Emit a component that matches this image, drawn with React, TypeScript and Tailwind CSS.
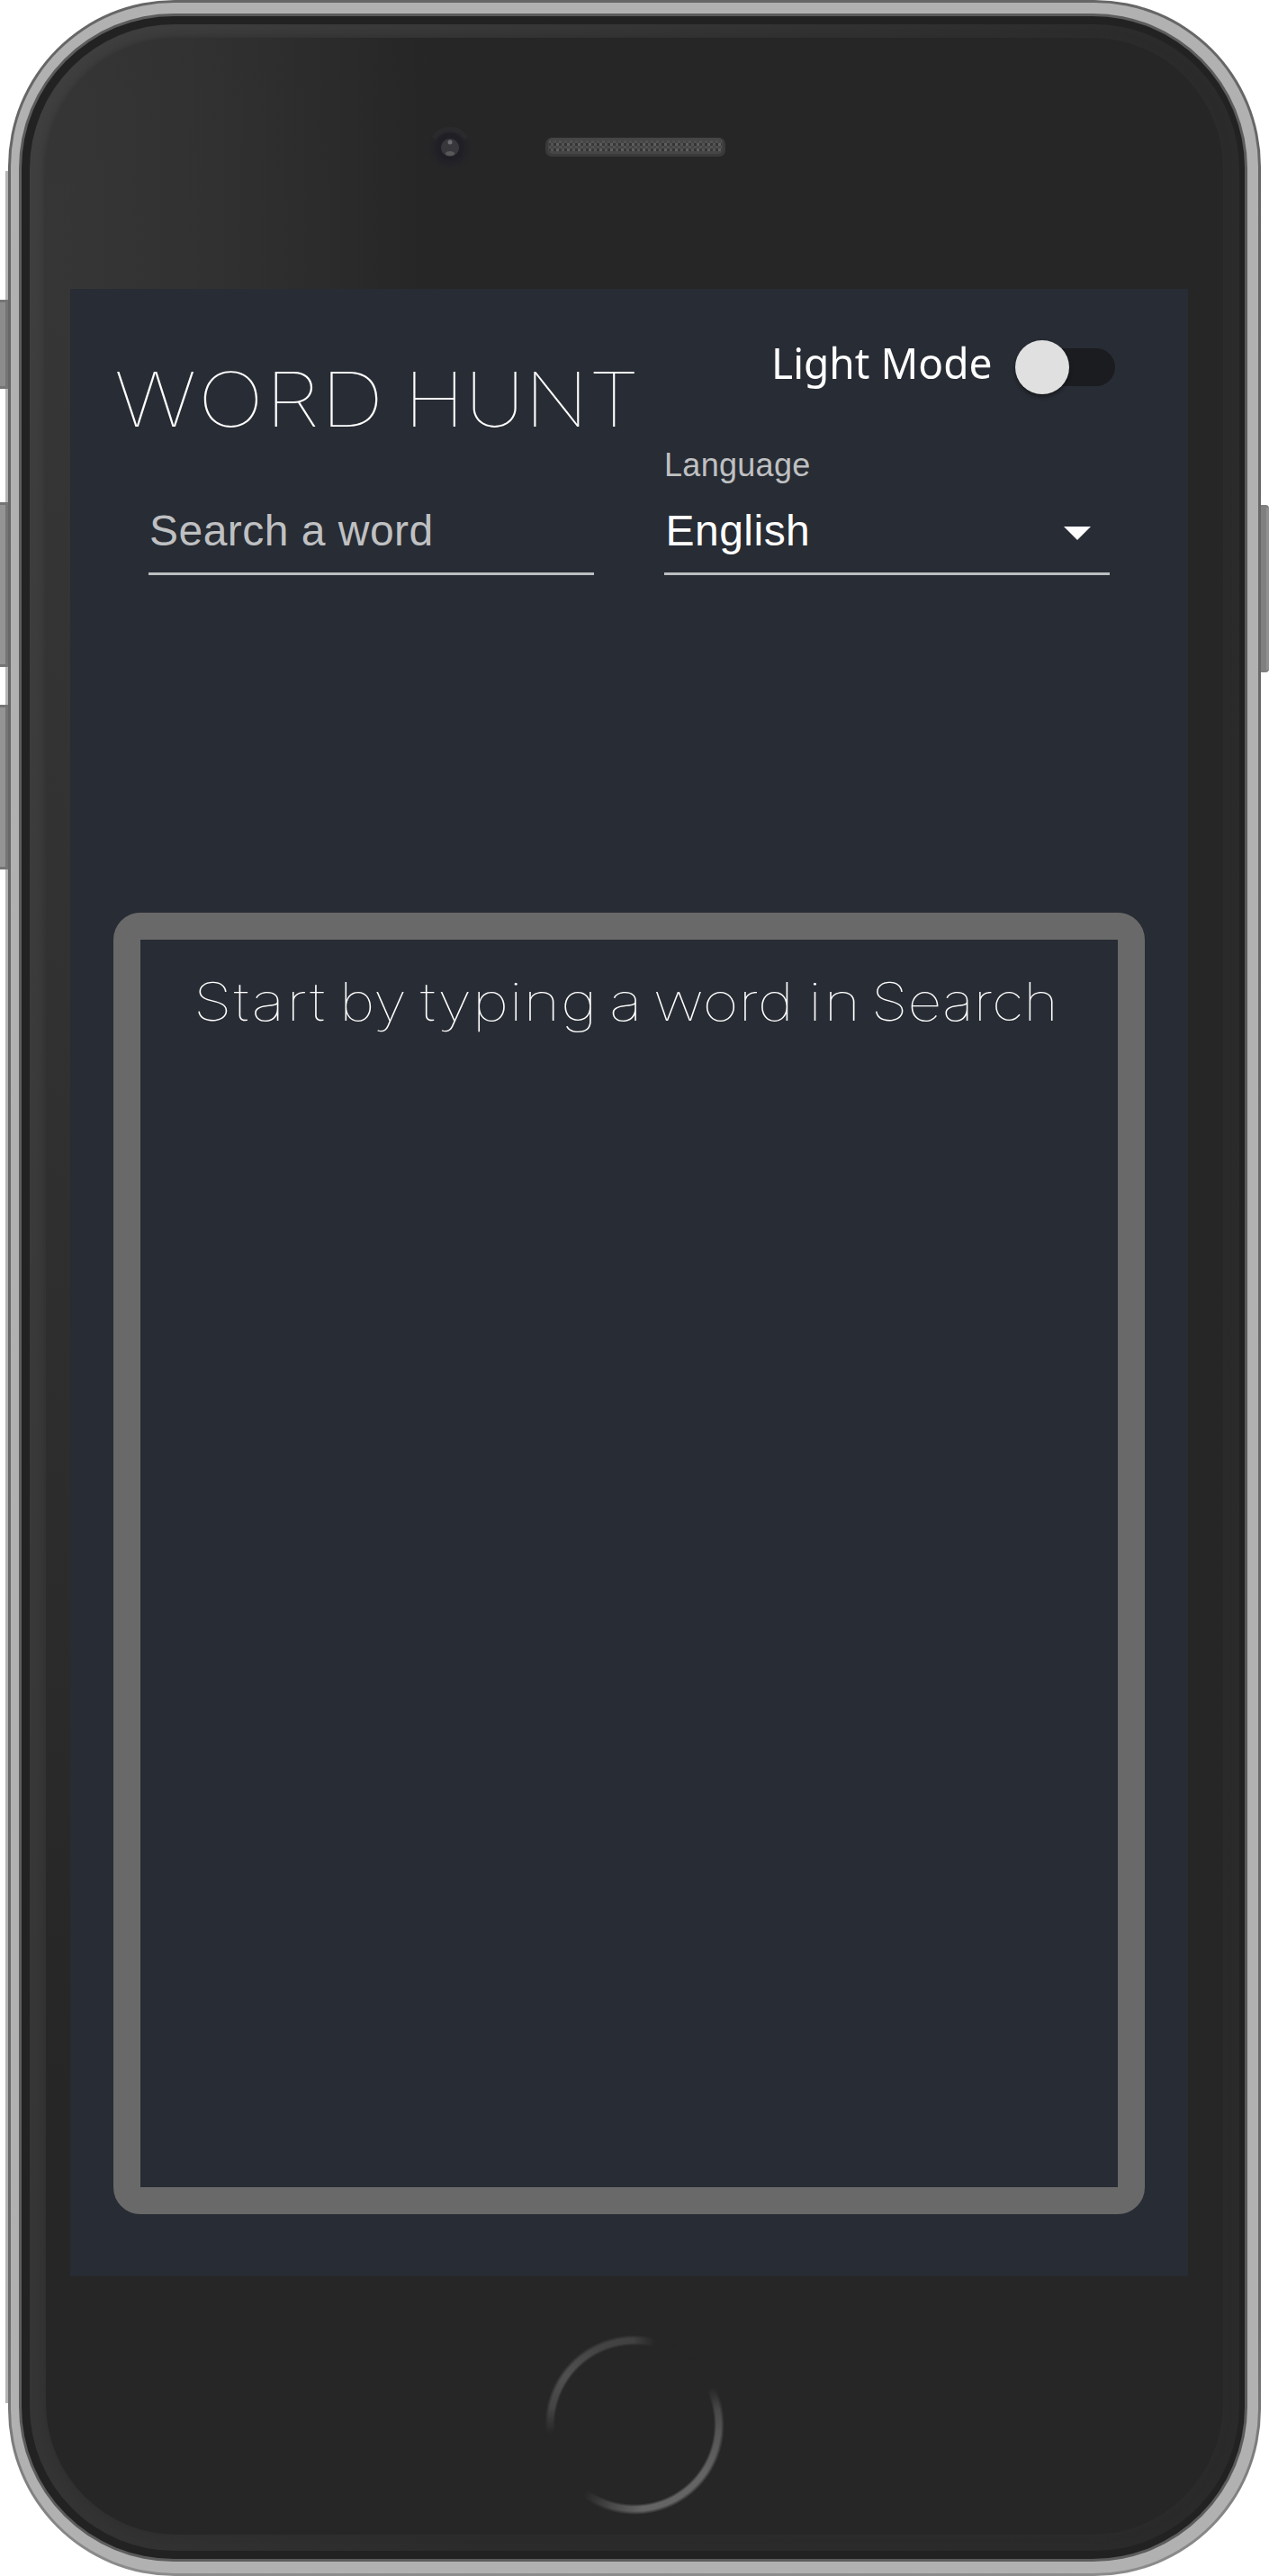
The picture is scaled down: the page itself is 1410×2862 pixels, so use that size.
import { ReactNode } from "react";

function Field({ label, children, tone }: { label?: string; children: ReactNode; tone: string }) {
  return (
    <div className="h-[150px] w-[495px] border-b-[3px] border-[#bcbec0] font-['Liberation_Sans',sans-serif]">
      <div className="mt-[10px] h-9 text-[36px] leading-9 tracking-[0.3px] text-[#bfc0c2]">{label}</div>
      <div className={"mt-[31px] flex h-12 items-center justify-between text-[48px] leading-[48px] tracking-[0.48px] " + tone}>
        {children}
      </div>
    </div>
  );
}

function Toggle() {
  return (
    <button className="relative flex h-[60px] w-[111px] items-center" aria-label="Light Mode">
      <span className="ml-[9px] h-[42px] w-[102px] rounded-full bg-[#1b1c20]" />
      <span className="absolute left-0 top-0 size-[60px] rounded-full bg-[#e0e0e0] shadow-[0_4px_4px_-2px_rgba(0,0,0,0.35),0_3px_5px_rgba(0,0,0,0.2)]" />
    </button>
  );
}

function WordHunt() {
  return (
    <main className="flex h-[2208px] w-[1242px] flex-col overflow-hidden bg-[#282c34] text-white">
      <header className="flex h-[168px] shrink-0">
        <h1 className="flex w-[779px] whitespace-nowrap pl-[49px] pt-[81px] font-['Inter',sans-serif] text-[84px] font-thin leading-[84px]">
          <span className="block w-[322px] origin-left scale-x-[1.17] tracking-[1.2px]">WORD</span>{" "}
          <span className="block w-[268px] origin-left scale-x-[1.09] tracking-[0.4px]">HUNT</span>
        </h1>
        <div className="mt-[57px] flex h-[60px]">
          <span className="-mt-[5px] block w-[271px] origin-left scale-x-[0.96] whitespace-nowrap font-['Noto_Sans',sans-serif] text-[48px] leading-[60px]">
            Light Mode
          </span>
          <Toggle />
        </div>
      </header>

      <section className="flex shrink-0 gap-[78px] pl-[87px]">
        <Field tone="text-[#bfc0c2]">
          <span className="pl-px">Search a word</span>
        </Field>
        <Field label="Language" tone="text-white">
          <span className="pl-[1.5px]">English</span>
          <svg className="mr-[21px] mt-[5px] h-[15px] w-[30px]" viewBox="0 0 30 15" fill="currentColor">
            <path d="M0 0h30L15 15z" />
          </svg>
        </Field>
      </section>

      <section className="ml-12 mt-[375px] h-[1446px] w-[1146px] shrink-0 rounded-[30px] border-[30px] border-[#696969]">
        <p className="flex whitespace-nowrap pl-[58.6px] pt-[39px] font-['Inter',sans-serif] text-[59px] font-thin leading-[60px] text-white">
          <span className="block w-[162.4px] origin-left scale-x-[1.18] tracking-[1.9px]">Start</span>{" "}
          <span className="block w-[89.7px] origin-left scale-x-[1.15]">by</span>{" "}
          <span className="block w-[210px] origin-left scale-x-[1.18] tracking-[0.6px]">typing</span>{" "}
          <span className="block w-[49.3px] origin-left scale-x-[1.18]">a</span>{" "}
          <span className="block w-[172px] origin-left scale-x-[1.17]">word</span>{" "}
          <span className="block w-[69.6px] origin-left scale-x-[1.18] tracking-[2px]">in</span>{" "}
          <span className="block w-[202px] origin-left scale-x-[1.12]">Search</span>
        </p>
      </section>
    </main>
  );
}

function Speaker() {
  return (
    <svg className="h-[21px] w-[200px]" viewBox="0 0 200 21">
      <defs>
        <pattern id="mesh" width="12" height="6" patternUnits="userSpaceOnUse">
          <rect width="12" height="6" fill="#464646" />
          <rect width="3" height="3" fill="#5e5e5e" />
          <rect x="6" width="3" height="3" fill="#545454" />
          <rect x="3" y="3" width="3" height="3" fill="#525252" />
          <rect x="9" y="3" width="3" height="3" fill="#4e4e4e" />
          <rect x="3" width="3" height="3" fill="#383838" />
          <rect x="9" width="3" height="3" fill="#343434" />
        </pattern>
      </defs>
      <rect width="200" height="21" rx="7" fill="#3a3a3a" />
      <rect x="3" y="0" width="194" height="18" rx="5" fill="#464646" />
      <rect x="4" y="3" width="192" height="12" fill="url(#mesh)" />
    </svg>
  );
}

function Camera() {
  return (
    <svg className="size-[60px]" viewBox="0 0 60 60">
      <defs>
        <radialGradient id="halo">
          <stop offset="0.5" stopColor="#202026" />
          <stop offset="1" stopColor="#27262a" stopOpacity="0" />
        </radialGradient>
      </defs>
      <circle cx="30" cy="31" r="29" fill="url(#halo)" />
      <path d="M12 21a21 21 0 0 1 36 0" fill="none" stroke="#303033" strokeWidth="6" opacity="0.5" />
      <circle cx="30" cy="30" r="14" fill="#201f25" />
      <circle cx="30" cy="31" r="10" fill="#38383c" />
      <circle cx="30" cy="25" r="2.500" fill="#6c6c70" />
      <ellipse cx="30" cy="37.500" rx="5" ry="2.500" fill="#58585b" />
    </svg>
  );
}

function HomeButton() {
  return (
    <button
      aria-label="Home"
      className="size-[200px] rounded-full bg-[conic-gradient(from_0deg,#3f3f3f_0deg,#262626_14deg,#262626_64deg,#484848_80deg,#555555_95deg,#646464_125deg,#646464_175deg,#4a4a4a_195deg,#262626_216deg,#262626_264deg,#454545_282deg,#505050_305deg,#444444_335deg,#414141_360deg)] [mask:radial-gradient(circle_closest-side,transparent_88%,black_91%,black_96%,transparent_100%)]"
    />
  );
}

export default function App() {
  return (
    <div className="flex h-[2862px] w-[1410px] overflow-hidden bg-white">
      <div className="flex w-[9px] shrink-0 flex-col">
        <div className="ml-[6px] mt-[190px] h-[143px] bg-[#b4b4b4]" />
        <div className="h-[99px] border-y-[3px] border-r-[3px] border-[#757575] bg-[#8c8c8c]" />
        <div className="ml-[6px] h-[126px] bg-[#b4b4b4]" />
        <div className="h-[183px] border-y-[3px] border-r-[3px] border-[#757575] bg-[#949494]" />
        <div className="ml-[6px] h-[42px] bg-[#b4b4b4]" />
        <div className="h-[183px] border-y-[3px] border-r-[3px] border-[#757575] bg-[#949494]" />
        <div className="ml-[6px] h-[1704px] bg-[#b4b4b4]" />
      </div>

      <div className="h-[2862px] w-[1392px] shrink-0 rounded-[185px] bg-[linear-gradient(to_bottom,#666666_0%,#6c6c6c_90%,#8c8c8c_100%)] p-[3px]">
        <div className="h-full rounded-[182px] bg-[#b1b1b1] pb-[13px] pl-[9px] pr-[12px] pt-[12px]">
          <div className="h-full rounded-[172px] bg-[#5c5c5c] p-[3px]">
            <div className="h-full rounded-[169px] bg-[#222222] pb-[9px] pl-[9px] pr-[6px] pt-[9px]">
              <div className="h-full rounded-[161px] bg-[linear-gradient(105deg,#3f3f3f_0%,#343434_35%,#2b2b2b_60%,#2a2a2a_100%)] pb-[18px] pl-[18px] pr-[18px] pt-[15px]">
                <div className="flex h-full flex-col rounded-[146px] bg-[#262626] bg-[radial-gradient(ellipse_430px_2100px_at_10px_250px,#363636_0%,#313131_40%,#2b2b2b_72%,#272727_90%,#262626_100%)] pl-[27px] shadow-[0_0_8px_#2d2d2d]">
                  <div className="flex h-[279px] shrink-0 pl-[392px] pt-[91px]">
                    <Camera />
                    <div className="ml-[76px] mt-[20px]">
                      <Speaker />
                    </div>
                  </div>
                  <WordHunt />
                  <div className="pl-[527px] pt-[65px]">
                    <HomeButton />
                  </div>
                </div>
              </div>
            </div>
          </div>
        </div>
      </div>

      <div className="w-[9px] shrink-0">
        <div className="mt-[561px] h-[186px] rounded-r-[4px] border-y-[3px] border-l-[6px] border-[#808080] bg-[#919191]" />
      </div>
    </div>
  );
}
